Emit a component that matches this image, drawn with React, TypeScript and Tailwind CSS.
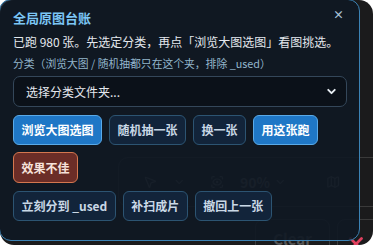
import { ChevronDown, MousePointer2, ScanEye, Map, PenOff, X } from 'lucide-react'

const btnBase =
  'h-[30px] px-[7.5px] rounded-[6px] border text-[12px] font-bold leading-none whitespace-nowrap'
const blueBtn = `${btnBase} bg-[#1f77c6] border-[#5aaae8] text-white`
const darkBtn = `${btnBase} bg-[#12243a] border-[#2c5472] text-[#c9d8e6]`

export default function App() {
  return (
    <div
      className="relative w-[373px] h-[245px] bg-white overflow-hidden"
      style={{ fontFamily: '"Noto Sans CJK SC", "Noto Sans", sans-serif' }}
    >
      {/* app behind the panel */}
      <div className="absolute inset-0 rounded-[14px] bg-[#1b1b1c]">
        <div className="absolute left-[118px] top-[157px] w-[270px] h-[50px] rounded-[10px] border border-[#3a3a3a] flex items-center gap-4 pl-6 text-[#5a5a5a]">
          <MousePointer2 size={16} />
          <ChevronDown size={14} />
          <ScanEye size={16} className="ml-2" />
          <span className="text-[14px] font-semibold">90%</span>
          <ChevronDown size={14} className="-ml-3" />
          <Map size={16} className="ml-6" />
          <PenOff size={16} className="ml-4" />
        </div>
        <div className="absolute left-[255px] top-[219px] w-[75px] h-[40px] rounded-[8px] border border-[#3a3a3a] flex items-center justify-center text-[#555] text-[15px] font-bold">
          Clear
        </div>
        <div className="absolute left-[337px] top-[219px] w-[50px] h-[40px] rounded-[8px] border border-[#3a3a3a] flex items-center justify-center">
          <X size={22} strokeWidth={3} className="text-[#e0405e] ml-[-12px] mt-[10px]" />
        </div>
      </div>

      {/* ledger panel */}
      <div className="absolute left-[-1px] top-[-1px] w-[361px] h-[242px] rounded-[12px] border border-[#3b82b4] bg-[#101823]/90 px-[13px] pt-[8px]">
        <div className="flex items-center justify-between">
          <h1 className="text-[13px] font-bold text-[#7cc6f5] leading-[20px]">全局原图台账</h1>
          <span className="text-[#a9c3d8] text-[11px] font-bold mr-[2px] -mt-[8px]">×</span>
        </div>
        <p className="mt-[5px] text-[12px] text-[#e4e8ee] leading-[18px] whitespace-nowrap">
          已跑 980 张。先选定分类，再点「浏览大图选图」看图挑选。
        </p>
        <p className="mt-[4px] text-[10.8px] text-[#93b6cc] leading-[16px] whitespace-nowrap">
          分类（浏览大图 / 随机抽都只在这个夹，排除 _used）
        </p>
        <div className="mt-[5px] w-[334px] h-[31px] rounded-[7px] border border-[#34475a] bg-[#0b1119] flex items-center justify-between pl-[12px] pr-[8px]">
          <span className="text-[12px] text-[#e4e8ee]">选择分类文件夹...</span>
          <ChevronDown size={13} strokeWidth={3.5} className="text-[#e8eef4]" />
        </div>
        <div className="mt-[8px] flex gap-[7px]">
          <button className={blueBtn}>浏览大图选图</button>
          <button className={darkBtn}>随机抽一张</button>
          <button className={darkBtn}>换一张</button>
          <button className={blueBtn}>用这张跑</button>
        </div>
        <div className="mt-[7px] flex">
          <button className={`${btnBase} h-[31px] bg-[#6b2d27] border-[#d4774f] text-[#f6e2da]`}>效果不佳</button>
        </div>
        <div className="mt-[8px] flex gap-[7px]">
          <button className={darkBtn}>立刻分到 _used</button>
          <button className={darkBtn}>补扫成片</button>
          <button className={darkBtn}>撤回上一张</button>
        </div>
      </div>
    </div>
  )
}
